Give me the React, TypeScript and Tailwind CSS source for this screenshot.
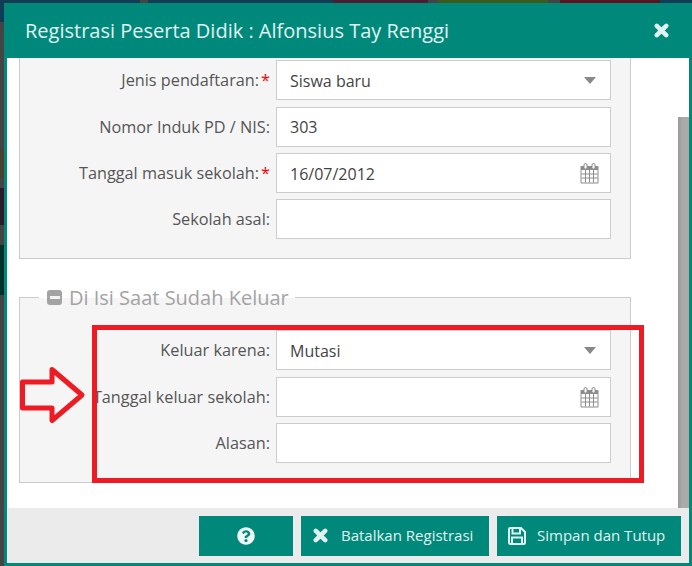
import React from "react";
import { FaQuestionCircle } from "react-icons/fa";

function CloseIcon({ size }: { size: number }) {
  return (
    <svg width={size} height={size} viewBox="0 0 14 14" className="shrink-0">
      <path d="M2.6 2.6L11.4 11.4M11.4 2.6L2.6 11.4" stroke="currentColor" strokeWidth="4.2" strokeLinecap="round" />
    </svg>
  );
}

function CalendarIcon() {
  return (
    <svg width="19" height="21" viewBox="0 0 19 21" className="shrink-0 text-[#8c8c8c]">
      <rect x="0.5" y="3" width="18" height="17.5" rx="1" fill="currentColor" />
      <rect x="1.5" y="7" width="16" height="12.5" fill="#fff" />
      <path d="M1.5 11H17.5M1.5 15H17.5M5.5 7V19.5M9.5 7V19.5M13.5 7V19.5" stroke="currentColor" strokeWidth="1" />
      <rect x="4" y="0.5" width="3" height="5.5" rx="1.5" fill="#fff" stroke="currentColor" />
      <rect x="12" y="0.5" width="3" height="5.5" rx="1.5" fill="#fff" stroke="currentColor" />
    </svg>
  );
}

function SaveIcon() {
  return (
    <svg width="18" height="18" viewBox="0 0 18 18" fill="none" stroke="currentColor" strokeWidth="2" className="shrink-0">
      <path d="M1 2.2A1.2 1.2 0 0 1 2.2 1H13L17 5V15.8A1.2 1.2 0 0 1 15.8 17H2.2A1.2 1.2 0 0 1 1 15.8Z" />
      <path d="M4.5 1V6.5H12V1" />
      <path d="M4 17V10.5H14V17" />
    </svg>
  );
}

function Field({ label, req, value, kind, extra }: { label: string; req?: boolean; value?: string; kind?: "select" | "date"; extra?: boolean }) {
  return (
    <div className={extra ? "mt-[1px] flex h-10 items-center" : "flex h-10 items-center"}>
      <div className="w-[256px] shrink-0 whitespace-nowrap pr-[6px] pt-[1px] text-right text-[16.25px] text-[#555]">
        {label}
        {req && <span className="ml-[2px] text-[#ff0000]">*</span>}
      </div>
      <div className="flex h-10 w-[335px] items-center justify-between border border-[#ccc] bg-white pl-[13px] pr-[11px] text-[16px] text-[#444]">
        <span className={extra ? "" : "pt-[1px]"}>{value}</span>
        {kind === "select" && <span className="mr-[3px] h-0 w-0 border-x-[6px] border-t-[7px] border-x-transparent border-t-[#888]" />}
        {kind === "date" && <CalendarIcon />}
      </div>
    </div>
  );
}

export default function App() {
  return (
    <div className="relative h-[566px] w-[692px] overflow-hidden bg-[#3f3f3f] pl-1 pt-[3px] font-['Open_Sans',sans-serif]">
      <div className="absolute left-0 top-0 h-[3px] w-full bg-[linear-gradient(to_right,#0f3d55_0,#0f3d55_140px,#444_140px,#444_148px,#0f3d55_148px,#0f3d55_333px,#4a1d30_333px,#4a1d30_428px,#444_428px,#444_438px,#3a5a20_438px,#3a5a20_548px,#444_548px,#444_560px,#5a1420_560px,#5a1420_660px,#0f3d55_660px)]" />
      <div className="absolute left-0 top-0 h-full w-1 bg-[linear-gradient(to_bottom,#0f3d55_0,#0f3d55_22px,#444_22px,#444_148px,#4a4030_148px,#4a4030_178px,#444_178px,#444_188px,#2d1a2a_188px,#2d1a2a_225px,#444_225px,#444_245px,#04302a_245px,#04302a_295px,#444_295px)]" />
      <div className="relative flex h-[563px] w-[688px] flex-col border-x-[3px] border-b-[3px] border-[#00897b] bg-white">
        <div className="-mx-[3px] flex h-[55px] shrink-0 items-center justify-between bg-[#00897b] pl-[21px] pr-[23px] text-[#e0f2f1]">
          <span className="pt-[1px] text-[20px]">Registrasi Peserta Didik : Alfonsius Tay Renggi</span>
          <CloseIcon size={15} />
        </div>
        <div className="flex min-h-0 flex-1">
          <div className="flex-1 overflow-hidden pl-3">
            <div className="h-[201px] w-[612px] border-x border-b border-[#ccc] bg-[#f5f5f5] pt-[2px]">
              <div className="flex flex-col gap-[6px]">
                <Field label="Jenis pendaftaran:" req value="Siswa baru" kind="select" />
                <Field label="Nomor Induk PD / NIS:" value="303" extra />
                <Field label="Tanggal masuk sekolah:" req value="16/07/2012" kind="date" />
                <Field label="Sekolah asal:" />
              </div>
            </div>
            <div className="relative mt-[38px] h-[186px] w-[612px] border border-[#ccc] bg-[#f5f5f5] pt-[32px]">
              <div className="absolute -top-[13px] left-[19px] flex h-[25px] w-[256px] items-center gap-[7px] bg-[linear-gradient(to_bottom,#fff_13px,#f5f5f5_13px)] pl-[8px] text-[20px] text-[#a3a3a3]">
                <span className="flex h-[15px] w-[15px] shrink-0 items-center justify-center rounded-[3px] bg-[#a3a3a3]">
                  <span className="h-[3px] w-[10px] bg-[#f5f5f5]" />
                </span>
                <span className="whitespace-nowrap">Di Isi Saat Sudah Keluar</span>
              </div>
              <div className="flex flex-col gap-[6px]">
                <Field label="Keluar karena:" value="Mutasi" kind="select" />
                <Field label="Tanggal keluar sekolah:" kind="date" extra />
                <Field label="Alasan:" />
              </div>
            </div>
          </div>
          <div className="w-[11px] shrink-0 pt-[59px]">
            <div className="h-[391px] bg-[linear-gradient(to_right,#999,#aaa_40%)]" />
          </div>
        </div>
        <div className="flex h-[55px] shrink-0 items-center justify-end gap-2 bg-[#ebebeb] pr-[8px] text-[15px] text-[#e0f2f1]">
          <div className="flex h-10 w-[94px] items-center justify-center bg-[#00897b] text-[#f0f8f7]">
            <FaQuestionCircle className="text-[18px]" />
          </div>
          <div className="flex h-10 w-[188px] items-center gap-[13px] bg-[#00897b] pl-[12px] text-[#e0f2f1]">
            <CloseIcon size={15} />
            <span>Batalkan Registrasi</span>
          </div>
          <div className="flex h-10 w-[184px] items-center gap-[11px] bg-[#00897b] pl-[11px]">
            <SaveIcon />
            <span>Simpan dan Tutup</span>
          </div>
        </div>
      </div>
      <div className="absolute left-[92px] top-[325px] h-[158px] w-[552px] border-[5px] border-[#ed1c24]" />
      <svg className="absolute left-[19px] top-[365px]" width="68" height="62" viewBox="0 0 68 62" fill="none">
        <path d="M3.5 17H33V4.5L63 30L33 55.5V43H3.5Z" stroke="#ed1c24" strokeWidth="5" strokeLinejoin="round" />
      </svg>
    </div>
  );
}
